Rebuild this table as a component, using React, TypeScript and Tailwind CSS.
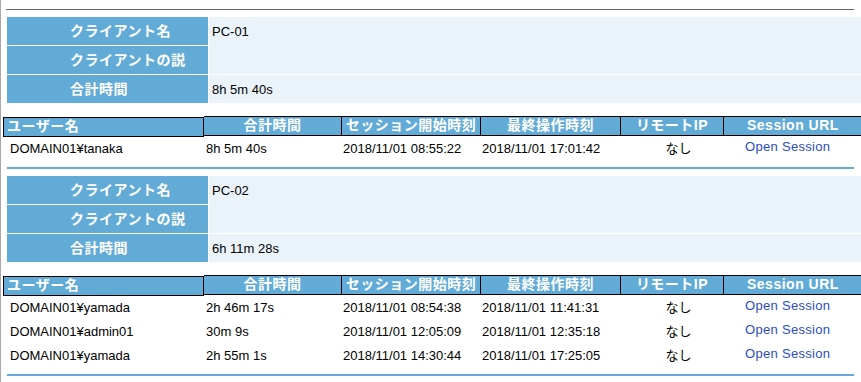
import React from "react";

interface Session {
  user: string;
  total: string;
  start: string;
  last: string;
  ip: string;
}

interface Client {
  name: string;
  total: string;
  sessions: Session[];
}

const clients: Client[] = [
  {
    name: "PC-01",
    total: "8h 5m 40s",
    sessions: [
      { user: "DOMAIN01¥tanaka", total: "8h 5m 40s", start: "2018/11/01 08:55:22", last: "2018/11/01 17:01:42", ip: "なし" },
    ],
  },
  {
    name: "PC-02",
    total: "6h 11m 28s",
    sessions: [
      { user: "DOMAIN01¥yamada", total: "2h 46m 17s", start: "2018/11/01 08:54:38", last: "2018/11/01 11:41:31", ip: "なし" },
      { user: "DOMAIN01¥admin01", total: "30m 9s", start: "2018/11/01 12:05:09", last: "2018/11/01 12:35:18", ip: "なし" },
      { user: "DOMAIN01¥yamada", total: "2h 55m 1s", start: "2018/11/01 14:30:44", last: "2018/11/01 17:25:05", ip: "なし" },
    ],
  },
];

const font = { fontFamily: '"Liberation Sans", "Noto Sans CJK JP", sans-serif' };

function InfoTable({ client }: { client: Client }) {
  const label = "bg-[#62abd6] text-white font-bold text-[14px] tracking-[0.5px] pl-[63px] flex items-center";
  return (
    <div className="ml-[6px] grid grid-cols-[201px_1fr] grid-rows-[28px_28px_28px] gap-px">
      <div className={label}>クライアント名</div>
      <div className="row-span-2 bg-[#eaf3fa]">
        <div className="h-[28px] flex items-center pl-[3px] pt-[2px] text-[13px] text-black">{client.name}</div>
      </div>
      <div className={label}>クライアントの説</div>
      <div className={label}>合計時間</div>
      <div className="bg-[#eaf3fa] flex items-center pl-[3px] pt-[2px] text-[13px] text-black">{client.total}</div>
    </div>
  );
}

function SessionTable({ sessions }: { sessions: Session[] }) {
  const th = "h-[20px] border-y border-r border-black bg-[#62abd6] text-white font-bold text-[14px] tracking-[0.5px] flex items-center shrink-0 leading-none pb-[2px]";
  return (
    <div className="mt-[13px]">
      <div className="flex items-start ml-[2px]">
        <div className={`${th} mt-px w-[201px] border-l pl-[3px]`}>ユーザー名</div>
        <div className={`${th} w-[138px] justify-center`}>合計時間</div>
        <div className={`${th} w-[139px] justify-center`}>セッション開始時刻</div>
        <div className={`${th} w-[140px] justify-center`}>最終操作時刻</div>
        <div className={`${th} w-[103px] justify-center`}>リモートIP</div>
        <div className={`${th} w-[140px] pl-[23px]`}>Session URL</div>
      </div>
      {sessions.map((s, i) => (
        <div key={i} className="flex items-center h-[24px] ml-[2px] text-[13px] text-black">
          <div className="w-[201px] shrink-0 pl-[7px]">{s.user}</div>
          <div className="w-[138px] shrink-0 pl-[2px]">{s.total}</div>
          <div className="w-[139px] shrink-0 pl-[1px]">{s.start}</div>
          <div className="w-[140px] shrink-0 pl-[1px]">{s.last}</div>
          <div className="w-[103px] shrink-0 pl-[12px] text-center">{s.ip}</div>
          <div className="w-[140px] shrink-0 pl-[21px] pb-[5px]">
            <a href="#" className="text-[#2b4cc6] tracking-[0.3px]">Open Session</a>
          </div>
        </div>
      ))}
      <div className="mt-[6px] ml-[6px] mr-[7px] h-[2px] bg-[#62abd6]" />
    </div>
  );
}

export default function App() {
  return (
    <div className="w-[861px] h-[382px] overflow-hidden bg-white border-l border-[#a8a8a8] pt-[9px]" style={font}>
      <div className="ml-[5px] mr-[7px] h-px bg-[#666666]" />
      {clients.map((c, i) => (
        <div key={i} className="mt-[7px]">
          <InfoTable client={c} />
          <SessionTable sessions={c.sessions} />
        </div>
      ))}
    </div>
  );
}
